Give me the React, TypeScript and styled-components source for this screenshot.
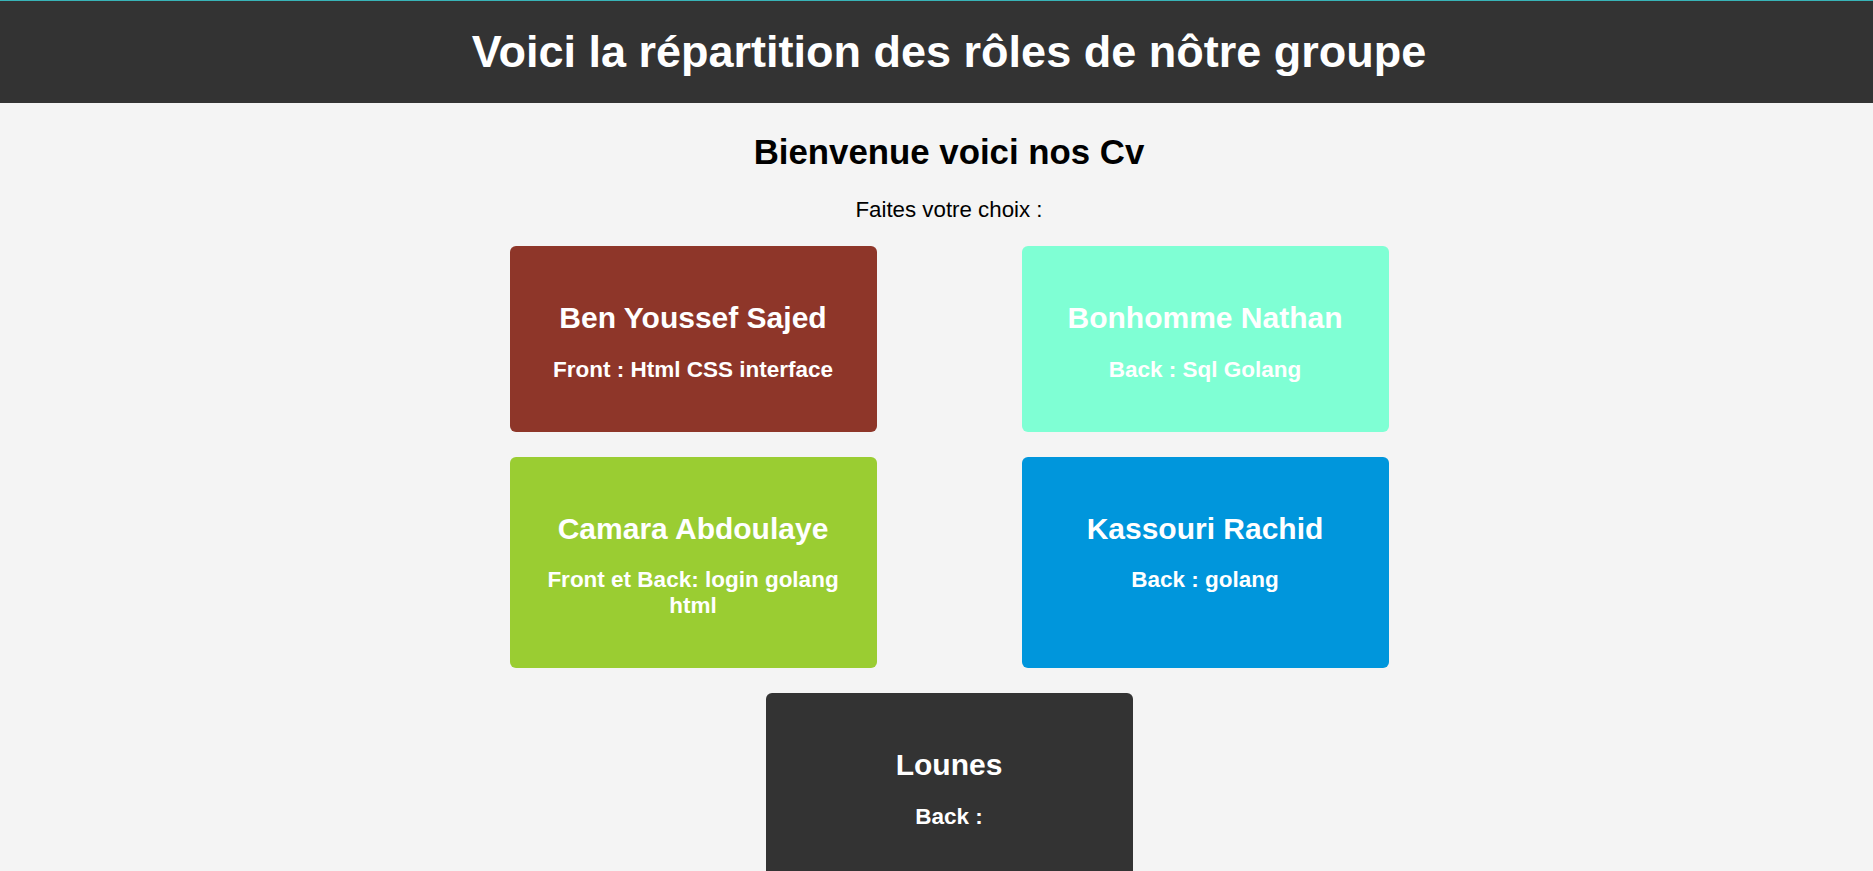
import React from "react";
import styled, { createGlobalStyle } from "styled-components";

const GlobalStyle = createGlobalStyle`
  html, body {
    margin: 0;
    padding: 0;
    background: #f4f4f4;
    font-family: "Liberation Sans", Arial, Helvetica, sans-serif;
  }
  * { box-sizing: border-box; }
`;

const Header = styled.header`
  background: #333333;
  border-top: 1px solid #38b4b8;
  padding: 25px 0 25px 25px;
  text-align: center;
`;

const Title = styled.h1`
  margin: 0;
  color: #ffffff;
  font-size: 45px;
  font-weight: 700;
  line-height: normal;
`;

const Main = styled.main`
  padding-left: 25px;
  text-align: center;
`;

const Welcome = styled.h2`
  margin: 29px 0 25px;
  font-size: 34.8px;
  font-weight: 700;
  color: #000000;
  line-height: normal;
`;

const Prompt = styled.p`
  margin: 0 0 23px;
  font-size: 22.3px;
  color: #000000;
  line-height: normal;
`;

const CardGrid = styled.div`
  width: 1024px;
  margin: 0 auto;
  display: flex;
  flex-wrap: wrap;
  justify-content: space-around;
  row-gap: 25px;
`;

const Card = styled.a<{ $bg: string }>`
  display: block;
  width: 367px;
  padding: 55px 20px 49px;
  background: ${(p) => p.$bg};
  border-radius: 6px;
  color: #ffffff;
  text-decoration: none;
`;

const Name = styled.h2`
  margin: 0 0 21.5px;
  font-size: 30px;
  font-weight: 700;
  line-height: normal;
`;

const Role = styled.p`
  margin: 0;
  font-size: 22.5px;
  font-weight: 700;
  line-height: normal;
`;

const members = [
  { name: "Ben Youssef Sajed", role: "Front : Html CSS interface", bg: "#8e3629" },
  { name: "Bonhomme Nathan", role: "Back : Sql Golang", bg: "#7fffd4" },
  { name: "Camara Abdoulaye", role: "Front et Back: login golang html", bg: "#9acd32" },
  { name: "Kassouri Rachid", role: "Back : golang", bg: "#0096dc" },
  { name: "Lounes", role: "Back :", bg: "#333333" },
];

export default function App() {
  return (
    <>
      <GlobalStyle />
      <Header>
        <Title>Voici la répartition des rôles de nôtre groupe</Title>
      </Header>
      <Main>
        <Welcome>Bienvenue voici nos Cv</Welcome>
        <Prompt>Faites votre choix :</Prompt>
        <CardGrid>
          {members.map((m) => (
            <Card key={m.name} $bg={m.bg}>
              <Name>{m.name}</Name>
              <Role>{m.role}</Role>
            </Card>
          ))}
        </CardGrid>
      </Main>
    </>
  );
}
